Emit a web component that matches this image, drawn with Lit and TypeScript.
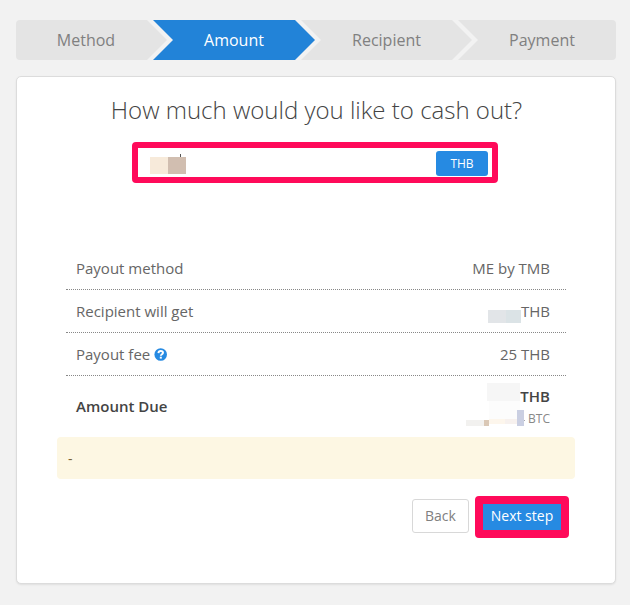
import { LitElement, html, svg, css } from "lit";
import { customElement } from "lit/decorators.js";

type Block = [number, number, number, number, string];

const mosaic = (blocks: Block[]) =>
  blocks.map(([x, y, w, h, c]) => svg`<rect x=${x} y=${y} width=${w} height=${h} fill=${c}></rect>`);

const INPUT_BLOCKS: Block[] = [
  [30, 0, 1, 3, "#555"],
  [0, 3, 18, 17, "#f7eada"],
  [18, 3, 18, 17, "#d1beb0"],
];
const GET_BLOCKS: Block[] = [
  [0, 0, 18, 13, "#e2e5e8"],
  [18, 0, 15, 13, "#dbe3e6"],
];
const DUE_BLOCKS: Block[] = [
  [21, 0, 33, 18, "#f6f6f6"],
  [23, 18, 31, 18, "#fcfcfc"],
  [23, 36, 16, 5, "#fdf6ec"],
  [39, 36, 12, 5, "#f7f1ee"],
  [0, 37, 18, 6, "#f2f1ef"],
  [18, 37, 5, 6, "#dac8b6"],
  [51, 27, 7, 16, "#cacfe2"],
  [58, 37, 1, 1, "#aaa"],
];

@customElement("app-root")
export class AppRoot extends LitElement {
  static styles = css`
    :host {
      display: block;
      box-sizing: border-box;
      width: 630px;
      height: 605px;
      padding: 20px 14px 0 16px;
      background: #f2f2f2;
      font-family: "Open Sans", "Noto Sans", sans-serif;
      font-size: 15px;
      line-height: 20px;
      color: #666;
      overflow: hidden;
    }
    * { box-sizing: border-box; }
    svg { display: block; }
    .steps {
      display: flex;
      height: 40px;
      border-radius: 4px;
      overflow: hidden;
    }
    .step {
      display: flex;
      align-items: center;
      justify-content: center;
      background: #e4e4e4;
      color: #808080;
      font-size: 16px;
      margin-left: -14px;
      flex: none;
      clip-path: polygon(0 0, calc(100% - 20px) 0, 100% 50%, calc(100% - 20px) 100%, 0 100%, 20px 50%);
    }
    .s1 {
      width: 151px;
      margin-left: 0;
      padding-right: 11px;
      clip-path: polygon(0 0, calc(100% - 20px) 0, 100% 50%, calc(100% - 20px) 100%, 0 100%);
    }
    .s2 { width: 162px; background: #2283d8; color: #fff; }
    .s3 { width: 171px; }
    .s4 {
      width: 158px;
      padding-left: 10px;
      clip-path: polygon(0 0, 100% 0, 100% 100%, 0 100%, 20px 50%);
    }
    .card {
      width: 600px;
      height: 508px;
      margin-top: 16px;
      padding: 17px 40px 0;
      border: 1px solid #dcdcdc;
      border-radius: 5px;
      background: #fff;
      box-shadow: 0 1px 2px rgba(0, 0, 0, 0.08);
    }
    h1 {
      margin: 0;
      height: 32px;
      line-height: 32px;
      font-size: 24px;
      font-weight: 300;
      color: #444;
      text-align: center;
      white-space: nowrap;
      padding-left: 1px;
    }
    .amount {
      display: flex;
      align-items: center;
      justify-content: space-between;
      width: 366px;
      height: 41px;
      margin: 16px 0 64px 75px;
      padding: 0 4px 0 12px;
      border: 6px solid #ff0a5a;
      border-radius: 4px;
    }
    .amount svg { margin-top: 3px; }
    .unit {
      width: 52px;
      height: 25px;
      border-radius: 3px;
      background: #268ae2;
      color: #fff;
      font-size: 12px;
      line-height: 25px;
      text-align: center;
      margin-top: 1px;
    }
    .rows { margin: 0 9px; }
    .row {
      display: flex;
      align-items: center;
      justify-content: space-between;
      height: 43px;
      padding: 0 16px 0 10px;
      border-bottom: 1px dotted #888;
    }
    .label { display: flex; align-items: center; gap: 4px; }
    .value { position: relative; text-align: right; }
    .due {
      height: 61px;
      padding-bottom: 1px;
      border-bottom: 0;
      font-weight: 600;
      color: #444;
    }
    .small {
      margin-bottom: -6px;
      font-size: 12px;
      font-weight: 400;
      color: #888;
      line-height: 26px;
    }
    .hidden-get { position: absolute; right: 29px; top: 9px; }
    .hidden-due { position: absolute; right: 25px; top: -3px; }
    .notice {
      height: 42px;
      padding: 0 11px;
      border-radius: 4px;
      background: #fdf7e3;
      color: #7a6338;
      font-size: 14px;
      line-height: 44px;
    }
    .actions {
      display: flex;
      align-items: center;
      justify-content: flex-end;
      gap: 6px;
      height: 42px;
      margin-top: 17px;
      padding-right: 6px;
      font-size: 14px;
    }
    .back {
      width: 57px;
      height: 34px;
      margin-bottom: 2px;
      border: 1px solid #d8d8d8;
      border-radius: 3px;
      line-height: 32px;
      text-align: center;
      color: #808080;
    }
    .next {
      width: 94px;
      height: 42px;
      border: 8px solid #ff0a5a;
      border-radius: 4px;
      background: #268ae2;
      color: #fff;
      line-height: 24px;
      text-align: center;
      white-space: nowrap;
    }
  `;

  render() {
    return html`
      <div class="steps">
        <div class="step s1">Method</div>
        <div class="step s2">Amount</div>
        <div class="step s3">Recipient</div>
        <div class="step s4">Payment</div>
      </div>
      <div class="card">
        <h1>How much would you like to cash out?</h1>
        <div class="amount">
          <svg width="36" height="20" shape-rendering="crispEdges">${mosaic(INPUT_BLOCKS)}</svg>
          <div class="unit">THB</div>
        </div>
        <div class="rows">
          <div class="row"><div class="label">Payout method</div><div class="value">ME by TMB</div></div>
          <div class="row">
            <div class="label">Recipient will get</div>
            <div class="value">THB
              <svg class="hidden-get" width="33" height="13" shape-rendering="crispEdges">${mosaic(GET_BLOCKS)}</svg>
            </div>
          </div>
          <div class="row">
            <div class="label">Payout fee
              <svg width="13" height="13" viewBox="0 0 13 13">
                <circle cx="6.7" cy="6.5" r="6.3" fill="#268ae2"></circle>
                <path d="M4.4 5.1C4.5 3.7 5.4 3 6.7 3C8.1 3 9 3.8 9 4.8C9 6.2 6.8 6.2 6.8 7.8" fill="none" stroke="#fff" stroke-width="1.9"></path>
                <rect x="5.8" y="8.7" width="2" height="1.9" fill="#fff"></rect>
              </svg>
            </div>
            <div class="value">25 THB</div>
          </div>
          <div class="row due">
            <div class="label">Amount Due</div>
            <div class="value">
              <div>THB</div>
              <div class="small">BTC</div>
              <svg class="hidden-due" width="59" height="43" shape-rendering="crispEdges">${mosaic(DUE_BLOCKS)}</svg>
            </div>
          </div>
        </div>
        <div class="notice">-</div>
        <div class="actions">
          <div class="back">Back</div>
          <div class="next">Next step</div>
        </div>
      </div>
    `;
  }
}
